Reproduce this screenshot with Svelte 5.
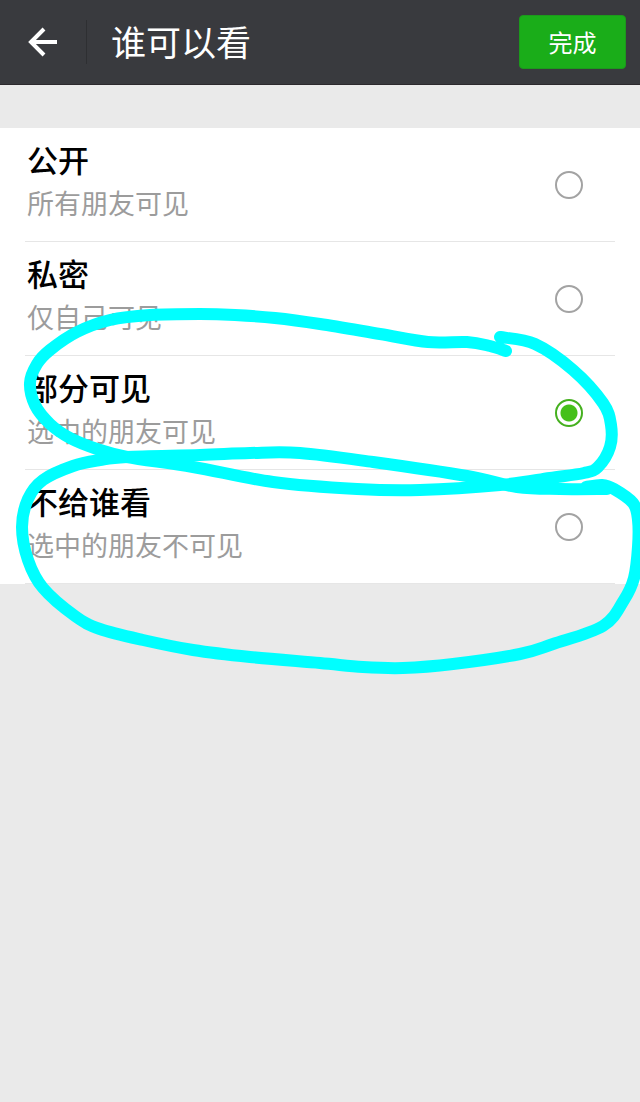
<script lang="ts">
    let selected = 'partial'

    const options = [
        { id: 'public', title: '公开', note: '所有朋友可见' },
        { id: 'private', title: '私密', note: '仅自己可见' },
        { id: 'partial', title: '部分可见', note: '选中的朋友可见' },
        { id: 'exclude', title: '不给谁看', note: '选中的朋友不可见' }
    ]

    // hand-drawn marker loops
    const loops = [
        [[506,351],[490,346],[467,342],[428,342],[380,334],[320,324],[275,318],[235,315],[200,314],[150,315],[110,320],[77,332],[50,350],[37,364],[30,383],[35,405],[50,424],[70,438],[97,449],[127,457],[193,467],[273,482],[357,489],[420,490],[500,485],[550,478],[584,473],[598,467],[610,447],[611,425],[603,403],[573,370],[535,344],[500,337]],
        [[586,487],[602,485],[614,489],[633,503],[638,520],[638,547],[634,578],[624,600],[603,626],[553,644],[520,654],[453,664],[403,668],[363,667],[320,663],[250,657],[193,650],[143,640],[100,629],[75,616],[43,588],[28,560],[22,527],[28,499],[43,480],[73,466],[100,460],[127,457],[200,455],[250,453],[300,453],[373,462],[467,476],[517,487],[560,489],[607,489]]
    ]

    function smooth(pts: number[][]) {
        let d = `M${pts[0][0]} ${pts[0][1]}`
        for (let i = 0; i < pts.length - 1; i++) {
            const a = pts[i - 1] || pts[i]
            const b = pts[i]
            const c = pts[i + 1]
            const e = pts[i + 2] || c
            d += ` C${b[0] + (c[0] - a[0]) / 6} ${b[1] + (c[1] - a[1]) / 6} ${c[0] - (e[0] - b[0]) / 6} ${c[1] - (e[1] - b[1]) / 6} ${c[0]} ${c[1]}`
        }
        return d
    }
</script>

<div class="page">
    <header>
        <button class="back" type="button" aria-label="返回">
            <svg viewBox="0 0 30 30" width="30" height="30">
                <path d="M16 2 L3 15 L16 28 M3 15 H29" />
            </svg>
        </button>
        <h1>谁可以看</h1>
        <button class="done" type="button">完成</button>
    </header>

    <main>
        {#each options as option}
            <label class="row">
                <span class="text">
                    <span class="title">{option.title}</span>
                    <span class="note">{option.note}</span>
                </span>
                <input type="radio" name="visibility" value={option.id} bind:group={selected} />
            </label>
        {/each}
    </main>

    <svg class="marker" viewBox="0 0 640 700" aria-hidden="true">
        {#each loops as loop}
            <path d={smooth(loop)} />
        {/each}
    </svg>
</div>

<style>
    :global(body) {
        background: #eaeaea;
    }

    .page {
        position: relative;
        min-height: 100vh;
        overflow: hidden;
        font-family: "Noto Sans CJK SC", sans-serif;
    }

    header {
        display: flex;
        align-items: center;
        height: 85px;
        padding-right: 14px;
        box-sizing: border-box;
        background: #393a3e;
        border-bottom: 1px solid #2c292d;
        color: #fff;
    }

    .back {
        display: flex;
        align-items: center;
        width: 87px;
        height: 44px;
        padding: 0 0 0 28px;
        box-sizing: border-box;
        background: none;
        border: none;
        border-right: 1px solid #2e2f32;
    }

    .back path {
        fill: none;
        stroke: #fff;
        stroke-width: 4;
    }

    h1 {
        flex: 1;
        margin: 0;
        padding: 0 0 2px 24px;
        font-size: 35px;
        line-height: 48px;
        font-weight: 400;
    }

    .done {
        width: 107px;
        height: 54px;
        padding: 0 0 2px;
        background: #1aad19;
        border: 1px solid #1c991c;
        border-radius: 4px;
        color: #fff;
        font-family: inherit;
        font-size: 24px;
    }

    main {
        margin-top: 43px;
        padding: 0 25px;
        background: #fff;
    }

    .row {
        display: flex;
        align-items: center;
        justify-content: space-between;
        height: 114px;
        padding: 0 32px 0 2px;
        box-sizing: border-box;
        border-bottom: 1px solid #e6e6e6;
    }

    .text {
        display: flex;
        flex-direction: column;
        padding-bottom: 8px;
    }

    .title {
        font-size: 31px;
        line-height: 44px;
        font-weight: 500;
        color: #000;
    }

    .note {
        font-size: 27px;
        line-height: 44px;
        color: #9c9c9c;
    }

    input {
        appearance: none;
        width: 28px;
        height: 28px;
        margin: 0;
        border: 2px solid #a3a3a3;
        border-radius: 50%;
    }

    input:checked {
        border-color: #45b01f;
        background: radial-gradient(circle, #45c01a 8px, #fff 9px);
    }

    .marker {
        position: absolute;
        top: 0;
        left: 0;
        width: 100%;
        pointer-events: none;
    }

    .marker path {
        fill: none;
        stroke: #00ffff;
        stroke-width: 12;
        stroke-linecap: round;
        stroke-linejoin: round;
    }
</style>
